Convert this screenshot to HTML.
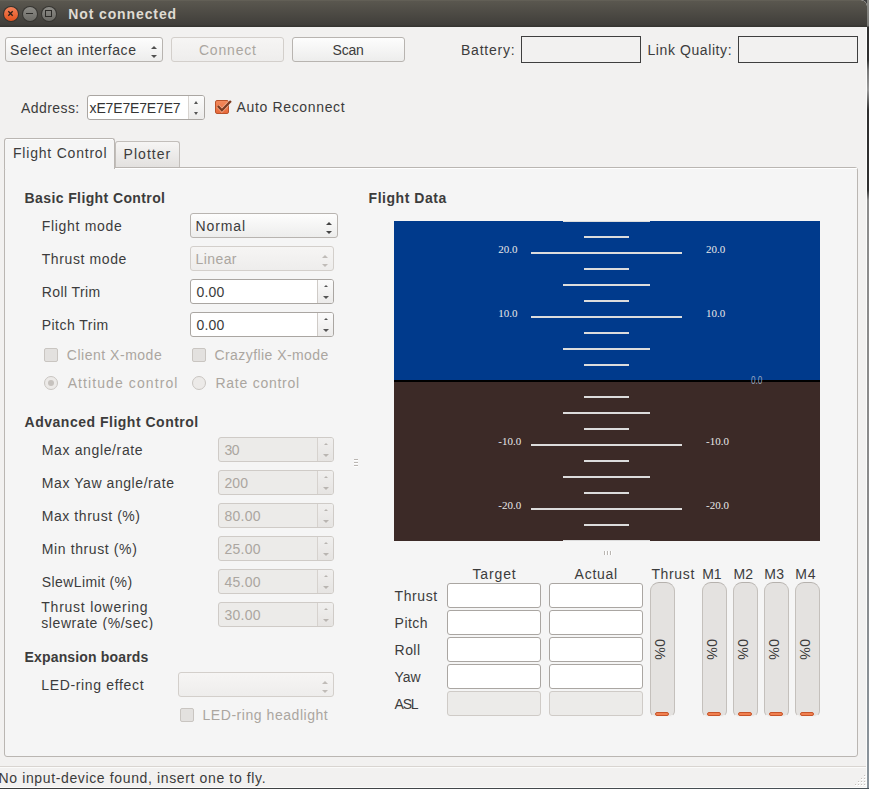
<!DOCTYPE html><html><head><meta charset="utf-8"><style>
*{margin:0;padding:0;box-sizing:border-box}
html,body{width:869px;height:789px;overflow:hidden;background:#3c3c3c}
body{position:relative;font-family:"Liberation Sans",sans-serif;font-size:14px;color:#3c3c3c}
div{position:absolute}
.t,.b,.d,.tt{white-space:pre;line-height:16px;letter-spacing:0.45px}
.b{font-weight:bold;letter-spacing:0.35px}
.d{color:#aba6a0}
.win{left:0;top:0;width:867px;height:788px;background:#f2f1f0;border-radius:0 6px 0 0;overflow:hidden}
.title{left:0;top:0;width:867px;height:27px;background:linear-gradient(#6a675d 0,#5a574f 1px,#403e3a 25px,#363531 26px);border-radius:0 6px 0 0}
.btn{border:1px solid #b8b4b0;border-radius:3px;background:linear-gradient(#fdfdfd,#ededec)}
.btnd{border:1px solid #d3cfcb;border-radius:3px;background:linear-gradient(#f6f5f4,#eeedec)}
.edit{border:1px solid #aaa6a2;border-radius:3px;background:#fff}
.editd{border:1px solid #cfcbc7;border-radius:3px;background:#ecebe9}
.frame{border:1px solid #3f3f3f;background:#f2f1f0}
.pane{border:1px solid #bab6b2;border-radius:3px;background:#f5f5f5}
.chk{border:1px solid #c9c5c1;border-radius:2px;background:#e3e1df}
.radio{border:1px solid #c9c5c1;border-radius:50%;background:#eceae8}
.prog{border:1px solid #c4c0bc;border-top-color:#b5b1ad;border-bottom-color:#f4f3f2;border-radius:9px 9px 6px 6px;background:#e4e2e0}
.ind{background:#f08050;border:1px solid #c8552a;border-radius:2px}
</style></head><body><div class="win">
<div class="title"></div>
<div style="left:2.5px;top:5.5px;width:16px;height:16px;border-radius:50%;background:#34322e"></div>
<div style="left:3.5px;top:6.5px;width:14px;height:14px;border-radius:50%;background:linear-gradient(#f3825a,#e2521d)"></div>
<svg style="position:absolute;left:0;top:0" width="60" height="27"><path d="M8.3 11.3 L12.7 15.7 M12.7 11.3 L8.3 15.7" stroke="#2a1e18" stroke-width="1.3" fill="none"/></svg>
<div style="left:21.5px;top:5.5px;width:16px;height:16px;border-radius:50%;background:#363531"></div>
<div style="left:22.5px;top:6.5px;width:14px;height:14px;border-radius:50%;background:linear-gradient(#8d8c87,#6c6b66)"></div>
<div style="left:26px;top:12.8px;width:7px;height:1.4px;background:#2b2a27"></div>
<div style="left:40.5px;top:5.5px;width:16px;height:16px;border-radius:50%;background:#363531"></div>
<div style="left:41.5px;top:6.5px;width:14px;height:14px;border-radius:50%;background:linear-gradient(#8d8c87,#6c6b66)"></div>
<div style="left:45px;top:10px;width:7px;height:7px;border:1.2px solid #2b2a27"></div>
<div class="b" style="left:68.20px;top:5.85px;letter-spacing:0.892px;color:#dfdbd2">Not connected</div>
<div class="btn" style="left:5px;top:37px;width:158px;height:25px;"></div>
<div class="t" style="left:10.00px;top:42.15px;letter-spacing:0.556px;">Select an interface</div>
<div style="left:150.5px;top:46px;width:0;height:0;border-left:3px solid transparent;border-right:3px solid transparent;border-bottom:3px solid #505050"></div>
<div style="left:150.5px;top:55px;width:0;height:0;border-left:3px solid transparent;border-right:3px solid transparent;border-top:3px solid #505050"></div>
<div class="btnd" style="left:171px;top:37px;width:113px;height:25px;"></div>
<div class="d" style="left:198.90px;top:42.15px;letter-spacing:0.817px;">Connect</div>
<div class="btn" style="left:292px;top:37px;width:113px;height:25px;"></div>
<div class="t" style="left:332.60px;top:42.15px;letter-spacing:-0.200px;">Scan</div>
<div class="t" style="left:461.00px;top:41.95px;letter-spacing:0.786px;">Battery:</div>
<div class="frame" style="left:521px;top:36px;width:120px;height:27px;"></div>
<div class="t" style="left:647.50px;top:42.15px;letter-spacing:0.583px;">Link Quality:</div>
<div class="frame" style="left:738px;top:36px;width:120px;height:27px;"></div>
<div class="t" style="left:21.00px;top:100.15px;letter-spacing:0.429px;">Address:</div>
<div class="edit" style="left:87px;top:95px;width:118px;height:25px;"></div>
<div style="left:188px;top:96px;width:16px;height:23px;border-left:1px solid #d8d4d0;background:linear-gradient(#fcfcfc,#ecebea);border-radius:0 2px 2px 0"></div>
<div style="left:194px;top:101px;width:0;height:0;border-left:2.5px solid transparent;border-right:2.5px solid transparent;border-bottom:3px solid #555"></div>
<div style="left:194px;top:112px;width:0;height:0;border-left:2.5px solid transparent;border-right:2.5px solid transparent;border-top:3px solid #555"></div>
<div class="t" style="left:89.60px;top:99.85px;letter-spacing:-0.160px;color:#333">xE7E7E7E7E7</div>
<div style="left:215px;top:100px;width:14px;height:14px;border-radius:2px;background:linear-gradient(#f28a5c,#e8693a);border:1px solid #b9532b"></div>
<svg style="position:absolute;left:215px;top:99px" width="18" height="16"><path d="M2.9 7 L6.9 11.2 L15.9 2" fill="none" stroke="#fbe3d6" stroke-opacity="0.5" stroke-width="3.8"/><path d="M2.9 7 L6.9 11.2 L15.9 2" fill="none" stroke="#7b3b20" stroke-width="2.3"/></svg>
<div class="t" style="left:236.50px;top:99.15px;letter-spacing:0.654px;">Auto Reconnect</div>
<div class="pane" style="left:4px;top:167px;width:854px;height:590px;"></div>
<div style="left:5px;top:168px;width:852px;height:1px;background:#ffffff"></div>
<div style="left:115px;top:141px;width:65px;height:26px;border:1px solid #c2beba;border-bottom:none;border-radius:3px 3px 0 0;background:linear-gradient(#f6f5f4,#e3e1df)"></div>
<div style="left:4px;top:138px;width:111px;height:31px;border:1px solid #bab6b2;border-bottom:none;border-radius:3px 3px 0 0;background:#f5f5f5"></div>
<div class="t" style="left:13.00px;top:145.15px;letter-spacing:0.792px;">Flight Control</div>
<div class="t" style="left:123.60px;top:145.95px;letter-spacing:1.033px;">Plotter</div>
<div style="left:0;top:766px;width:867px;height:1px;background:#d9d5d1"></div>
<div style="left:0;top:767px;width:867px;height:1px;background:#fbfbfa"></div>
<div class="t" style="left:-1.50px;top:770.15px;letter-spacing:0.633px;">No input-device found, insert one to fly.</div>
</div>
<div class="b" style="left:24.60px;top:190.15px;letter-spacing:0.389px;">Basic Flight Control</div>
<div class="t" style="left:41.70px;top:217.85px;letter-spacing:0.700px;">Flight mode</div>
<div class="t" style="left:41.70px;top:250.85px;letter-spacing:0.610px;">Thrust mode</div>
<div class="t" style="left:41.70px;top:283.85px;letter-spacing:0.412px;">Roll Trim</div>
<div class="t" style="left:41.70px;top:316.85px;letter-spacing:0.478px;">Pitch Trim</div>
<div class="btn" style="left:190px;top:213px;width:148px;height:25px;"></div>
<div class="t" style="left:195.60px;top:218.15px;letter-spacing:0.880px;">Normal</div>
<div style="left:325.5px;top:222px;width:0;height:0;border-left:3px solid transparent;border-right:3px solid transparent;border-bottom:3px solid #444"></div>
<div style="left:325.5px;top:231px;width:0;height:0;border-left:3px solid transparent;border-right:3px solid transparent;border-top:3px solid #444"></div>
<div class="btnd" style="left:190px;top:246px;width:144px;height:25px;"></div>
<div class="d" style="left:195.60px;top:251.15px;letter-spacing:0.400px;">Linear</div>
<div style="left:321.5px;top:255px;width:0;height:0;border-left:3px solid transparent;border-right:3px solid transparent;border-bottom:3px solid #c0bcb8"></div>
<div style="left:321.5px;top:264px;width:0;height:0;border-left:3px solid transparent;border-right:3px solid transparent;border-top:3px solid #c0bcb8"></div>
<div class="edit" style="left:190px;top:279px;width:144px;height:25px;"></div>
<div style="left:317px;top:280px;width:16px;height:23px;border-left:1px solid #cfcbc7;background:linear-gradient(#fbfbfb,#ecebea);border-radius:0 2px 2px 0"></div>
<div style="left:323.5px;top:285px;width:0;height:0;border-left:2px solid transparent;border-right:2px solid transparent;border-bottom:2.5px solid #555"></div>
<div style="left:322.5px;top:296px;width:0;height:0;border-left:3px solid transparent;border-right:3px solid transparent;border-top:3px solid #555"></div>
<div class="t" style="left:196.50px;top:284.45px;letter-spacing:0.167px;">0.00</div>
<div class="edit" style="left:190px;top:312px;width:144px;height:25px;"></div>
<div style="left:317px;top:313px;width:16px;height:23px;border-left:1px solid #cfcbc7;background:linear-gradient(#fbfbfb,#ecebea);border-radius:0 2px 2px 0"></div>
<div style="left:323.5px;top:318px;width:0;height:0;border-left:2px solid transparent;border-right:2px solid transparent;border-bottom:2.5px solid #555"></div>
<div style="left:322.5px;top:329px;width:0;height:0;border-left:3px solid transparent;border-right:3px solid transparent;border-top:3px solid #555"></div>
<div class="t" style="left:196.50px;top:317.45px;letter-spacing:0.167px;">0.00</div>
<div class="chk" style="left:44px;top:348px;width:14px;height:14px;"></div>
<div class="d" style="left:66.80px;top:346.95px;letter-spacing:0.517px;">Client X-mode</div>
<div class="chk" style="left:192px;top:348px;width:14px;height:14px;"></div>
<div class="d" style="left:214.40px;top:346.95px;letter-spacing:0.440px;">Crazyflie X-mode</div>
<div class="radio" style="left:44px;top:376px;width:14px;height:14px;"></div>
<div style="left:48px;top:380px;width:6px;height:6px;border-radius:50%;background:#c6c2be"></div>
<div class="d" style="left:67.70px;top:375.15px;letter-spacing:1.087px;">Attitude control</div>
<div class="radio" style="left:192px;top:376px;width:14px;height:14px;"></div>
<div class="d" style="left:215.50px;top:375.15px;letter-spacing:0.736px;">Rate control</div>
<div class="b" style="left:24.60px;top:413.75px;letter-spacing:0.505px;">Advanced Flight Control</div>
<div class="t" style="left:41.80px;top:442.15px;letter-spacing:0.631px;">Max angle/rate</div>
<div class="t" style="left:41.80px;top:475.15px;letter-spacing:0.571px;">Max Yaw angle/rate</div>
<div class="t" style="left:41.80px;top:508.15px;letter-spacing:0.554px;">Max thrust (%)</div>
<div class="t" style="left:41.80px;top:541.15px;letter-spacing:0.608px;">Min thrust (%)</div>
<div class="t" style="left:41.80px;top:574.15px;letter-spacing:0.392px;">SlewLimit (%)</div>
<div class="editd" style="left:218px;top:437px;width:116px;height:25px;"></div>
<div style="left:317px;top:438px;width:16px;height:23px;border-left:1px solid #d6d2ce;background:linear-gradient(#f0efee,#e6e4e2);border-radius:0 2px 2px 0"></div>
<div style="left:323.5px;top:443px;width:0;height:0;border-left:2px solid transparent;border-right:2px solid transparent;border-bottom:2.5px solid #b9b5b1"></div>
<div style="left:322.5px;top:454px;width:0;height:0;border-left:3px solid transparent;border-right:3px solid transparent;border-top:3px solid #b9b5b1"></div>
<div class="d" style="left:224.50px;top:442.45px;letter-spacing:-0.500px;">30</div>
<div class="editd" style="left:218px;top:470px;width:116px;height:25px;"></div>
<div style="left:317px;top:471px;width:16px;height:23px;border-left:1px solid #d6d2ce;background:linear-gradient(#f0efee,#e6e4e2);border-radius:0 2px 2px 0"></div>
<div style="left:323.5px;top:476px;width:0;height:0;border-left:2px solid transparent;border-right:2px solid transparent;border-bottom:2.5px solid #b9b5b1"></div>
<div style="left:322.5px;top:487px;width:0;height:0;border-left:3px solid transparent;border-right:3px solid transparent;border-top:3px solid #b9b5b1"></div>
<div class="d" style="left:224.50px;top:475.45px;letter-spacing:0.050px;">200</div>
<div class="editd" style="left:218px;top:503px;width:116px;height:25px;"></div>
<div style="left:317px;top:504px;width:16px;height:23px;border-left:1px solid #d6d2ce;background:linear-gradient(#f0efee,#e6e4e2);border-radius:0 2px 2px 0"></div>
<div style="left:323.5px;top:509px;width:0;height:0;border-left:2px solid transparent;border-right:2px solid transparent;border-bottom:2.5px solid #b9b5b1"></div>
<div style="left:322.5px;top:520px;width:0;height:0;border-left:3px solid transparent;border-right:3px solid transparent;border-top:3px solid #b9b5b1"></div>
<div class="d" style="left:224.50px;top:508.45px;letter-spacing:0.275px;">80.00</div>
<div class="editd" style="left:218px;top:536px;width:116px;height:25px;"></div>
<div style="left:317px;top:537px;width:16px;height:23px;border-left:1px solid #d6d2ce;background:linear-gradient(#f0efee,#e6e4e2);border-radius:0 2px 2px 0"></div>
<div style="left:323.5px;top:542px;width:0;height:0;border-left:2px solid transparent;border-right:2px solid transparent;border-bottom:2.5px solid #b9b5b1"></div>
<div style="left:322.5px;top:553px;width:0;height:0;border-left:3px solid transparent;border-right:3px solid transparent;border-top:3px solid #b9b5b1"></div>
<div class="d" style="left:224.50px;top:541.45px;letter-spacing:0.275px;">25.00</div>
<div class="editd" style="left:218px;top:569px;width:116px;height:25px;"></div>
<div style="left:317px;top:570px;width:16px;height:23px;border-left:1px solid #d6d2ce;background:linear-gradient(#f0efee,#e6e4e2);border-radius:0 2px 2px 0"></div>
<div style="left:323.5px;top:575px;width:0;height:0;border-left:2px solid transparent;border-right:2px solid transparent;border-bottom:2.5px solid #b9b5b1"></div>
<div style="left:322.5px;top:586px;width:0;height:0;border-left:3px solid transparent;border-right:3px solid transparent;border-top:3px solid #b9b5b1"></div>
<div class="d" style="left:224.50px;top:574.45px;letter-spacing:0.275px;">45.00</div>
<div class="editd" style="left:218px;top:602px;width:116px;height:25px;"></div>
<div style="left:317px;top:603px;width:16px;height:23px;border-left:1px solid #d6d2ce;background:linear-gradient(#f0efee,#e6e4e2);border-radius:0 2px 2px 0"></div>
<div style="left:323.5px;top:608px;width:0;height:0;border-left:2px solid transparent;border-right:2px solid transparent;border-bottom:2.5px solid #b9b5b1"></div>
<div style="left:322.5px;top:619px;width:0;height:0;border-left:3px solid transparent;border-right:3px solid transparent;border-top:3px solid #b9b5b1"></div>
<div class="d" style="left:224.50px;top:607.45px;letter-spacing:0.275px;">30.00</div>
<div class="t" style="left:41.30px;top:598.75px;letter-spacing:0.757px;">Thrust lowering</div>
<div style="left:0;top:615px;width:200px;height:15px;overflow:hidden">
<div class="t" style="left:41.30px;top:0.25px;letter-spacing:0.567px;">slewrate (%/sec)</div>
</div>
<div class="b" style="left:24.50px;top:649.35px;letter-spacing:0.167px;">Expansion boards</div>
<div class="t" style="left:41.30px;top:677.35px;letter-spacing:0.650px;">LED-ring effect</div>
<div class="btnd" style="left:178px;top:672px;width:156px;height:25px;"></div>
<div style="left:321.5px;top:681px;width:0;height:0;border-left:3px solid transparent;border-right:3px solid transparent;border-bottom:3px solid #c0bcb8"></div>
<div style="left:321.5px;top:690px;width:0;height:0;border-left:3px solid transparent;border-right:3px solid transparent;border-top:3px solid #c0bcb8"></div>
<div class="chk" style="left:180px;top:708px;width:14px;height:14px;"></div>
<div class="d" style="left:202.50px;top:706.95px;letter-spacing:0.547px;">LED-ring headlight</div>
<div class="b" style="left:368.60px;top:189.65px;letter-spacing:0.530px;">Flight Data</div>
<svg style="position:absolute;left:394px;top:221px" width="426" height="320" viewBox="0 0 426 320"><rect x="0" y="0" width="426" height="160" fill="#003a8c"/><rect x="0" y="160" width="426" height="160" fill="#3c2a27"/><rect x="0" y="159" width="426" height="2" fill="#000"/><rect x="169" y="319" width="87" height="2" fill="#dcdcdc"/><rect x="190" y="303" width="45" height="2" fill="#dcdcdc"/><rect x="137" y="287" width="151" height="2" fill="#dcdcdc"/><rect x="190" y="271" width="45" height="2" fill="#dcdcdc"/><rect x="169" y="255" width="87" height="2" fill="#dcdcdc"/><rect x="190" y="239" width="45" height="2" fill="#dcdcdc"/><rect x="137" y="223" width="151" height="2" fill="#dcdcdc"/><rect x="190" y="207" width="45" height="2" fill="#dcdcdc"/><rect x="169" y="191" width="87" height="2" fill="#dcdcdc"/><rect x="190" y="175" width="45" height="2" fill="#dcdcdc"/><rect x="190" y="143" width="45" height="2" fill="#dcdcdc"/><rect x="169" y="127" width="87" height="2" fill="#dcdcdc"/><rect x="190" y="111" width="45" height="2" fill="#dcdcdc"/><rect x="137" y="95" width="151" height="2" fill="#dcdcdc"/><rect x="190" y="79" width="45" height="2" fill="#dcdcdc"/><rect x="169" y="63" width="87" height="2" fill="#dcdcdc"/><rect x="190" y="47" width="45" height="2" fill="#dcdcdc"/><rect x="137" y="31" width="151" height="2" fill="#dcdcdc"/><rect x="190" y="15" width="45" height="2" fill="#dcdcdc"/><rect x="169" y="-1" width="87" height="2" fill="#dcdcdc"/><text x="104.30000000000001" y="31.5" font-family="Liberation Serif" font-size="11" fill="#e8e8e8">20.0</text><text x="312" y="31.5" font-family="Liberation Serif" font-size="11" fill="#e8e8e8">20.0</text><text x="104.30000000000001" y="95.5" font-family="Liberation Serif" font-size="11" fill="#e8e8e8">10.0</text><text x="312" y="95.5" font-family="Liberation Serif" font-size="11" fill="#e8e8e8">10.0</text><text x="104.30000000000001" y="223.5" font-family="Liberation Serif" font-size="11" fill="#e8e8e8">-10.0</text><text x="312" y="223.5" font-family="Liberation Serif" font-size="11" fill="#e8e8e8">-10.0</text><text x="104.30000000000001" y="287.5" font-family="Liberation Serif" font-size="11" fill="#e8e8e8">-20.0</text><text x="312" y="287.5" font-family="Liberation Serif" font-size="11" fill="#e8e8e8">-20.0</text><text x="357" y="162.8" font-family="Liberation Sans" font-size="10" fill="#9aa8c0" transform="translate(357,0) scale(0.82,1) translate(-357,0)">0.0</text></svg>
<div style="left:354px;top:459px;width:4px;height:1px;background:#bab6b2"></div>
<div style="left:354px;top:460px;width:4px;height:1px;background:#ffffff"></div>
<div style="left:604px;top:551px;width:1px;height:4px;background:#bab6b2"></div>
<div style="left:605px;top:551px;width:1px;height:4px;background:#ffffff"></div>
<div style="left:354px;top:462px;width:4px;height:1px;background:#bab6b2"></div>
<div style="left:354px;top:463px;width:4px;height:1px;background:#ffffff"></div>
<div style="left:607px;top:551px;width:1px;height:4px;background:#bab6b2"></div>
<div style="left:608px;top:551px;width:1px;height:4px;background:#ffffff"></div>
<div style="left:354px;top:465px;width:4px;height:1px;background:#bab6b2"></div>
<div style="left:354px;top:466px;width:4px;height:1px;background:#ffffff"></div>
<div style="left:610px;top:551px;width:1px;height:4px;background:#bab6b2"></div>
<div style="left:611px;top:551px;width:1px;height:4px;background:#ffffff"></div>
<div class="t" style="left:472.50px;top:566.15px;letter-spacing:0.860px;">Target</div>
<div class="t" style="left:574.60px;top:566.15px;letter-spacing:0.740px;">Actual</div>
<div class="t" style="left:651.40px;top:566.15px;letter-spacing:0.660px;">Thrust</div>
<div class="t" style="left:702.30px;top:566.15px;letter-spacing:-0.300px;">M1</div>
<div class="t" style="left:733.40px;top:566.15px;letter-spacing:0.300px;">M2</div>
<div class="t" style="left:764.20px;top:566.15px;letter-spacing:0.500px;">M3</div>
<div class="t" style="left:795.20px;top:566.15px;letter-spacing:0.800px;">M4</div>
<div class="t" style="left:394.60px;top:587.65px;letter-spacing:0.580px;">Thrust</div>
<div class="edit" style="left:447px;top:583px;width:94px;height:25px;"></div>
<div class="edit" style="left:549px;top:583px;width:94px;height:25px;"></div>
<div class="t" style="left:394.60px;top:614.65px;letter-spacing:0.475px;">Pitch</div>
<div class="edit" style="left:447px;top:610px;width:94px;height:25px;"></div>
<div class="edit" style="left:549px;top:610px;width:94px;height:25px;"></div>
<div class="t" style="left:394.60px;top:641.65px;letter-spacing:0.433px;">Roll</div>
<div class="edit" style="left:447px;top:637px;width:94px;height:25px;"></div>
<div class="edit" style="left:549px;top:637px;width:94px;height:25px;"></div>
<div class="t" style="left:394.60px;top:668.65px;letter-spacing:-0.150px;">Yaw</div>
<div class="edit" style="left:447px;top:664px;width:94px;height:25px;"></div>
<div class="edit" style="left:549px;top:664px;width:94px;height:25px;"></div>
<div class="t" style="left:394.60px;top:695.65px;letter-spacing:-1.200px;">ASL</div>
<div class="editd" style="left:447px;top:691px;width:94px;height:25px;"></div>
<div class="editd" style="left:549px;top:691px;width:94px;height:25px;"></div>
<div class="prog" style="left:650px;top:582px;width:25px;height:135px;"></div>
<div class="ind" style="left:655px;top:712px;width:14px;height:4px;"></div>
<div class="t" style="left:646.7px;top:582px;width:25px;height:135px;writing-mode:vertical-rl;text-align:center;line-height:25px;letter-spacing:0.4px">0%</div>
<div class="prog" style="left:702px;top:582px;width:25px;height:135px;"></div>
<div class="ind" style="left:707px;top:712px;width:14px;height:4px;"></div>
<div class="t" style="left:698.7px;top:582px;width:25px;height:135px;writing-mode:vertical-rl;text-align:center;line-height:25px;letter-spacing:0.4px">0%</div>
<div class="prog" style="left:733px;top:582px;width:25px;height:135px;"></div>
<div class="ind" style="left:738px;top:712px;width:14px;height:4px;"></div>
<div class="t" style="left:729.7px;top:582px;width:25px;height:135px;writing-mode:vertical-rl;text-align:center;line-height:25px;letter-spacing:0.4px">0%</div>
<div class="prog" style="left:764px;top:582px;width:25px;height:135px;"></div>
<div class="ind" style="left:769px;top:712px;width:14px;height:4px;"></div>
<div class="t" style="left:760.7px;top:582px;width:25px;height:135px;writing-mode:vertical-rl;text-align:center;line-height:25px;letter-spacing:0.4px">0%</div>
<div class="prog" style="left:795px;top:582px;width:25px;height:135px;"></div>
<div class="ind" style="left:800px;top:712px;width:14px;height:4px;"></div>
<div class="t" style="left:791.7px;top:582px;width:25px;height:135px;writing-mode:vertical-rl;text-align:center;line-height:25px;letter-spacing:0.4px">0%</div>
<div style="left:864px;top:775px;width:1px;height:1px;background:#c4c0bc"></div>
<div style="left:864px;top:776px;width:2px;height:1px;background:#ffffff"></div>
<div style="left:861px;top:778px;width:1px;height:1px;background:#c4c0bc"></div>
<div style="left:861px;top:779px;width:2px;height:1px;background:#ffffff"></div>
<div style="left:864px;top:778px;width:1px;height:1px;background:#c4c0bc"></div>
<div style="left:864px;top:779px;width:2px;height:1px;background:#ffffff"></div>
<div style="left:858px;top:781px;width:1px;height:1px;background:#c4c0bc"></div>
<div style="left:858px;top:782px;width:2px;height:1px;background:#ffffff"></div>
<div style="left:861px;top:781px;width:1px;height:1px;background:#c4c0bc"></div>
<div style="left:861px;top:782px;width:2px;height:1px;background:#ffffff"></div>
<div style="left:864px;top:781px;width:1px;height:1px;background:#c4c0bc"></div>
<div style="left:864px;top:782px;width:2px;height:1px;background:#ffffff"></div>
<div style="left:855px;top:784px;width:1px;height:1px;background:#c4c0bc"></div>
<div style="left:855px;top:785px;width:2px;height:1px;background:#ffffff"></div>
<div style="left:858px;top:784px;width:1px;height:1px;background:#c4c0bc"></div>
<div style="left:858px;top:785px;width:2px;height:1px;background:#ffffff"></div>
<div style="left:861px;top:784px;width:1px;height:1px;background:#c4c0bc"></div>
<div style="left:861px;top:785px;width:2px;height:1px;background:#ffffff"></div>
<div style="left:864px;top:784px;width:1px;height:1px;background:#c4c0bc"></div>
<div style="left:864px;top:785px;width:2px;height:1px;background:#ffffff"></div>
<div style="left:866px;top:27px;width:1px;height:761px;background:#fbfbfa"></div>
<div style="left:0;top:787px;width:867px;height:1px;background:#fbfbfa"></div>
<div style="left:867px;top:0;width:2px;height:789px;background:linear-gradient(#8a8a86 0,#7a7a76 26px,#2f2f2f 27px,#2f2f2f 60px,#777 70px,#9a9a9a 90px,#2f2f2f 110px,#2f2f2f 190px,#8c8c8c 200px,#8a8a8a 520px,#8a949c 100%)"></div>
<div style="left:0;top:788px;width:869px;height:1px;background:linear-gradient(90deg,#3a3a3a,#4a5258)"></div>
<div style="left:6px;top:139px;width:107px;height:1px;background:#ffffff;opacity:0.8"></div></body></html>
